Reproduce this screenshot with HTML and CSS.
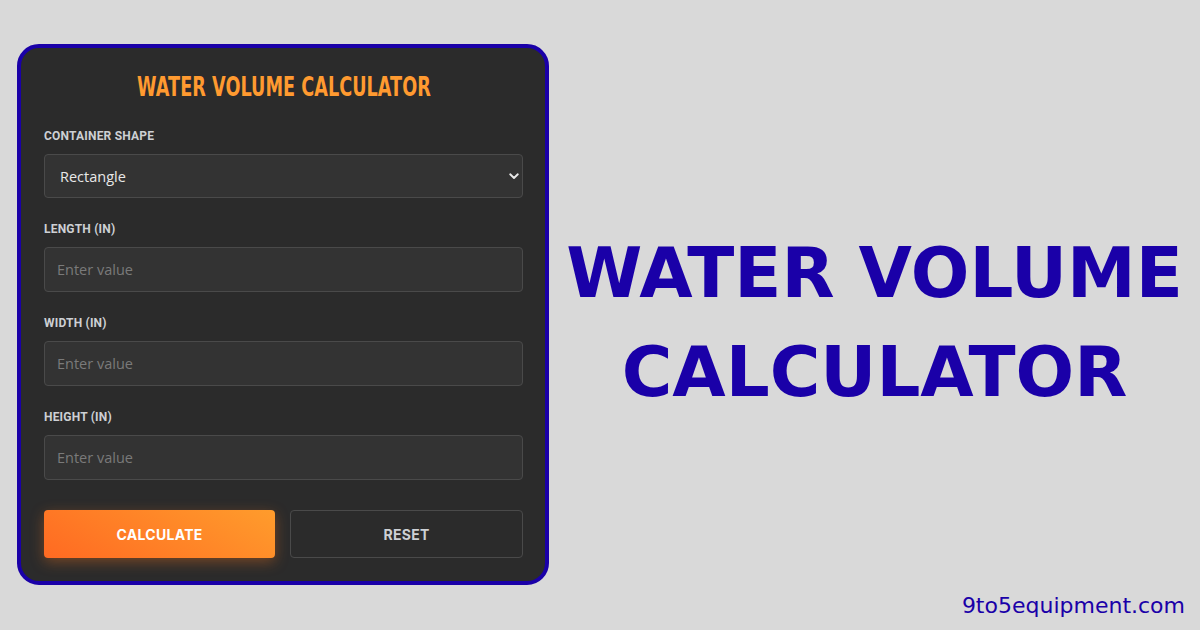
FILE: index.html
```html
<!DOCTYPE html>
<html lang="en">
<head>
    <meta charset="UTF-8">
    <meta name="viewport" content="width=device-width, initial-scale=1.0">
    <title>Water Volume Calculator</title>
    <link rel="stylesheet" href="styles.css">
</head>
<body>
    <div id="page">
        <div class="card">
            <h2 class="card-title"><span>WATER VOLUME CALCULATOR</span></h2>

            <div class="field">
                <label for="shape">CONTAINER SHAPE</label>
                <div class="select-wrap">
                    <select id="shape">
                        <option>Rectangle</option>
                        <option>Cylinder</option>
                        <option>Sphere</option>
                    </select>
                    <svg class="chev" width="10" height="7" viewBox="0 0 10 7"><path d="M1.2 1.3 L5 5 L8.8 1.3" fill="none" stroke="#e8e8e8" stroke-width="1.9" stroke-linecap="round" stroke-linejoin="round"/></svg>
                </div>
            </div>

            <div class="field">
                <label for="len">LENGTH (IN)</label>
                <input id="len" type="text" placeholder="Enter value">
            </div>

            <div class="field">
                <label for="wid">WIDTH (IN)</label>
                <input id="wid" type="text" placeholder="Enter value">
            </div>

            <div class="field">
                <label for="hei">HEIGHT (IN)</label>
                <input id="hei" type="text" placeholder="Enter value">
            </div>

            <div class="actions">
                <button class="btn btn-calc">CALCULATE</button>
                <button class="btn btn-reset">RESET</button>
            </div>
        </div>

        <div class="side">
            <h1 class="headline">WATER VOLUME<br>CALCULATOR</h1>
            <div class="site">9to5equipment.com</div>
        </div>
    </div>
</body>
</html>
```

FILE: styles.css
```css
* {
    margin: 0;
    padding: 0;
    box-sizing: border-box;
}
html, body {
    width: 1200px;
    height: 630px;
    background: #d9d9d9;
    overflow: hidden;
}
#page {
    display: flex;
    height: 630px;
}

/* calculator card */
.card {
    margin: 44px 0 0 17px;
    width: 532px;
    height: 541px;
    background: #2b2b2b;
    border: 4px solid #1a00a8;
    border-radius: 22px;
    padding: 23px 22px 23px 23px;
    display: flex;
    flex-direction: column;
}
.card-title {
    font-family: "DejaVu Sans", sans-serif;
    font-weight: bold;
    font-size: 26px;
    line-height: 32px;
    color: #ff9a30;
    text-align: center;
    margin-bottom: 25px;
}
/* no condensed face installed, so squeeze the glyphs */
.card-title span {
    display: inline-block;
    transform: scaleX(0.68);
    white-space: nowrap;
}
.field {
    display: flex;
    flex-direction: column;
    gap: 10px;
    margin-bottom: 23px;
}
.field label {
    font-family: Roboto, "Liberation Sans", sans-serif;
    font-weight: bold;
    font-size: 12px;
    line-height: 16px;
    letter-spacing: 0.2px;
    color: #cdd0d4;
}
.select-wrap {
    position: relative;
}
.field select,
.field input {
    width: 100%;
    height: 45px;
    background: #333333;
    border: 1px solid #4a4a4a;
    border-radius: 4px;
    font-family: "Open Sans", sans-serif;
    font-size: 14.5px;
    outline: none;
}
.field select {
    -webkit-appearance: none;
    appearance: none;
    height: 44px;
    padding: 0 15px;
    color: #e8e8e8;
}
.field input {
    padding: 0 12px;
    color: #e8e8e8;
}
.field input::placeholder {
    color: #7a7a7a;
}
.chev {
    position: absolute;
    right: 4px;
    top: 19px;
}
.actions {
    display: flex;
    gap: 15px;
    margin-top: 7px;
}
.btn {
    flex: 1;
    height: 48px;
    border-radius: 4px;
    font-family: Inter, "Open Sans", sans-serif;
    font-weight: bold;
    font-size: 14px;
    letter-spacing: 0.3px;
    cursor: pointer;
}
.btn-calc {
    border: none;
    color: #ffffff;
    background: linear-gradient(30deg, #ff6a22, #ff9c2c);
    box-shadow: 0 4px 14px rgba(255, 120, 30, 0.35);
}
.btn-reset {
    background: transparent;
    border: 1px solid #4a4a4a;
    color: #cdd0d4;
}

/* right side */
.side {
    flex: 1;
    display: flex;
    flex-direction: column;
    align-items: center;
}
.headline {
    margin-top: 224px;
    font-family: "DejaVu Sans", sans-serif;
    font-weight: bold;
    font-size: 69px;
    line-height: 99px;
    color: #1a00a8;
    text-align: center;
}
.site {
    margin-top: auto;
    align-self: flex-end;
    margin-right: 15px;
    margin-bottom: 12px;
    font-family: "DejaVu Sans", sans-serif;
    font-size: 22px;
    color: #1a00a8;
}
```
